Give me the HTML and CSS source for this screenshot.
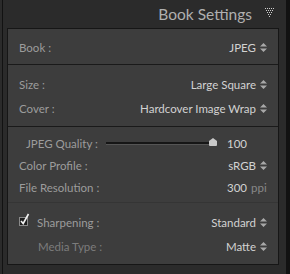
FILE: index.html
```html
<!DOCTYPE html>
<html>
<head>
<meta charset="utf-8">
<link rel="stylesheet" href="styles.css">
</head>
<body>
<div class="outer">
  <div class="header">
    <span class="title">Book Settings</span>
    <svg class="collapse" width="11" height="10" viewBox="0 0 11 10">
      <g fill="#cfcfcf">
        <rect x="0" y="0" width="1" height="1"/><rect x="2" y="0" width="1" height="1"/><rect x="4" y="0" width="1" height="1"/><rect x="6" y="0" width="1" height="1"/><rect x="8" y="0" width="1" height="1"/>
        <rect x="1" y="2" width="1" height="1"/><rect x="3" y="2" width="1" height="1"/><rect x="5" y="2" width="1" height="1"/><rect x="7" y="2" width="1" height="1"/>
        <rect x="2" y="4" width="1" height="1"/><rect x="4" y="4" width="1" height="1"/><rect x="6" y="4" width="1" height="1"/>
        <rect x="3" y="6" width="1" height="1"/><rect x="5" y="6" width="1" height="1"/>
        <rect x="4" y="8" width="1" height="1"/>
      </g>
    </svg>
  </div>
  <div class="panel">
    <div class="section s1">
      <div class="row">
        <span class="label">Book :</span>
        <span class="value">JPEG</span>
        <svg class="stepper" width="7" height="9" viewBox="0 0 7 9"><path d="M3.5 0 L7 3.5 L0 3.5 Z M0 5.5 L7 5.5 L3.5 9 Z" fill="#a8a8a8"/></svg>
      </div>
    </div>
    <div class="section s2">
      <div class="row">
        <span class="label">Size :</span>
        <span class="value">Large Square</span>
        <svg class="stepper" width="7" height="9" viewBox="0 0 7 9"><path d="M3.5 0 L7 3.5 L0 3.5 Z M0 5.5 L7 5.5 L3.5 9 Z" fill="#a8a8a8"/></svg>
      </div>
      <div class="row">
        <span class="label">Cover :</span>
        <span class="value">Hardcover Image Wrap</span>
        <svg class="stepper" width="7" height="9" viewBox="0 0 7 9"><path d="M3.5 0 L7 3.5 L0 3.5 Z M0 5.5 L7 5.5 L3.5 9 Z" fill="#a8a8a8"/></svg>
      </div>
    </div>
    <div class="section s3">
      <div class="row row-slider">
        <span class="label indent">JPEG Quality :</span>
        <div class="slider">
          <div class="track"></div>
          <svg class="thumb" width="10" height="8" viewBox="0 0 10 8"><path d="M5 0 L9 3 L9 7 Q9 8 8 8 L2 8 Q1 8 1 7 L1 3 Z" fill="#c9c9c9"/></svg>
        </div>
        <span class="value num">100</span>
        <span class="unit"></span>
      </div>
      <div class="row">
        <span class="label">Color Profile :</span>
        <span class="value">sRGB</span>
        <svg class="stepper" width="7" height="9" viewBox="0 0 7 9"><path d="M3.5 0 L7 3.5 L0 3.5 Z M0 5.5 L7 5.5 L3.5 9 Z" fill="#a8a8a8"/></svg>
      </div>
      <div class="row">
        <span class="label">File Resolution :</span>
        <span class="value">300</span>
        <span class="unit">ppi</span>
      </div>
    </div>
    <div class="section s4">
      <div class="row">
        <svg class="check" width="12" height="14" viewBox="0 0 12 14">
          <rect x="0.5" y="4.5" width="8" height="8" fill="#1e1e1e" stroke="#8a8a8a"/>
          <path d="M2 8 L4.2 10.5 L9.5 1" fill="none" stroke="#f0f0f0" stroke-width="1.6"/>
        </svg>
        <span class="label">Sharpening :</span>
        <span class="value">Standard</span>
        <svg class="stepper" width="7" height="9" viewBox="0 0 7 9"><path d="M3.5 0 L7 3.5 L0 3.5 Z M0 5.5 L7 5.5 L3.5 9 Z" fill="#a8a8a8"/></svg>
      </div>
      <div class="row">
        <span class="label dim indent2">Media Type :</span>
        <span class="value">Matte</span>
        <svg class="stepper" width="7" height="9" viewBox="0 0 7 9"><path d="M3.5 0 L7 3.5 L0 3.5 Z M0 5.5 L7 5.5 L3.5 9 Z" fill="#a8a8a8"/></svg>
      </div>
    </div>
  </div>
</div>
</body>
</html>
```
FILE: styles.css
```css
html, body {
  margin: 0;
  padding: 0;
  background: #2b2b2b;
  width: 290px;
  height: 274px;
  overflow: hidden;
  font-family: Lato, "Liberation Sans", sans-serif;
}

.outer {
  margin-left: 2px;
  width: 288px;
  height: 274px;
  box-sizing: border-box;
  border-left: 1px solid #121212;
  border-right: 4px solid #121212;
  padding: 0 7px 0 4px;
  background: #2b2b2b;
}

.header {
  height: 28px;
  display: flex;
  align-items: center;
  justify-content: flex-end;
  padding-right: 3px;
  box-sizing: border-box;
}

.title {
  font-size: 15.5px;
  color: #b0b0b0;
  margin-right: 13px;
  margin-top: -1px;
}

.collapse {
  margin-top: -3px;
}

.panel {
  border: 1px solid #161616;
  background: #3d3d3d;
  height: 237px;
  box-sizing: border-box;
}

.section {
  padding: 0 11px;
}

.s1 {
  padding-top: 8px;
  padding-bottom: 7px;
}

.s2 {
  border-top: 1px solid #1a1a1a;
  padding-top: 7px;
  padding-bottom: 6px;
}

.s3 {
  border-top: 1px solid #1a1a1a;
  padding-top: 5px;
  padding-bottom: 4px;
}

.s4 {
  border-top: 1px solid #353535;
  padding-top: 7px;
}

.row {
  display: flex;
  align-items: center;
  height: 24px;
  font-size: 11.5px;
}

.s1 .row {
  height: 20px;
}

.s3 .row {
  height: 22px;
}

.label {
  color: #9c9c9c;
  flex: 1;
  white-space: nowrap;
}

.label.indent {
  flex: none;
  margin-left: 7px;
}

.label.indent2 {
  margin-left: 19px;
}

.label.dim {
  color: #7c7c7c;
}

.value {
  color: #d2d2d2;
  white-space: nowrap;
}

.stepper {
  margin-left: 4px;
  flex: none;
}

.unit {
  width: 16px;
  margin-left: 4px;
  color: #888;
  flex: none;
}

.slider {
  flex: 1;
  position: relative;
  height: 10px;
  margin: 0 9px 0 8px;
  display: flex;
  align-items: center;
}

.track {
  width: 100%;
  height: 2px;
  background: #161616;
  border-bottom: 1px solid #555;
  margin-right: 5px;
}

.thumb {
  position: absolute;
  right: 0;
  top: 0;
}

.check {
  margin-right: 6px;
  margin-top: -5px;
  flex: none;
}
```
